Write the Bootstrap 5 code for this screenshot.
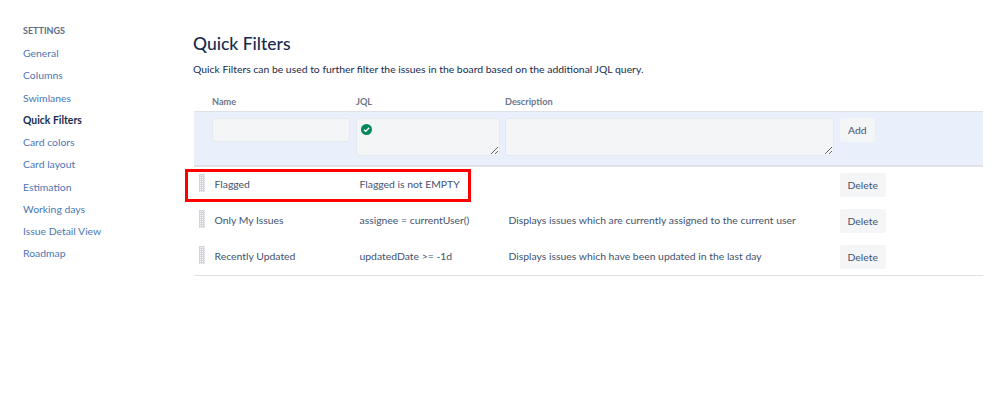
<!DOCTYPE html>
<html lang="en">
<head>
<meta charset="utf-8">
<title>Quick Filters</title>
<link href="https://cdn.jsdelivr.net/npm/bootstrap@5.3.0/dist/css/bootstrap.min.css" rel="stylesheet">
<style>
html,body{height:420px;overflow:hidden;background:#fff}
body{font-family:"Lato","Open Sans",sans-serif;font-size:10.4px;color:#172b4d;width:998px}
.shell{padding-top:25px;display:flex}
.side{width:193px;flex:none;padding-left:23px}
.side-title{font-size:9px;font-weight:700;color:#5e6c84;line-height:12px;margin-bottom:9px}
.side a{display:block;color:#4a76b5;text-decoration:none;line-height:14px;margin-bottom:8.25px;font-size:10.4px}
.side a.on{color:#172b4d;font-weight:700}
.main{width:790px;flex:none;position:relative}
.main h1{font-size:17.5px;font-weight:500;color:#172b4d;margin:7px 0 6px;line-height:24px}
.intro{font-size:10.4px;line-height:14px;margin:0 0 20px}
.cols{display:flex;margin-left:1px;padding-left:18px}
.c1{width:144px;flex:none}
.c2{width:149px;flex:none}
.c3{width:329px;flex:none}
.heads{font-size:9.2px;font-weight:700;color:#6b778c;line-height:12px;height:15px}
.adder{background:#e9f0fb;border-top:1px solid #dfe1e6;border-bottom:2px solid #dfe1e6;height:56px;padding-top:6px}
.fld{background:#f4f5f7;border:1px solid #e6e8ec;border-radius:3px;display:block;padding:0;margin:0;outline:0}
.f1{width:138px;height:24px}
.wrapjql{position:relative;width:144px;height:38px}
.f2{width:144px;height:38px;resize:both}
.f3{width:329px;height:38px;resize:both}
.gap{margin-left:6px}
.okicon{position:absolute;left:5px;top:6px;width:11px;height:11px;display:block}
.act{background:#f4f5f7;color:#42526e;border:0;border-radius:3px;font-size:10.4px;line-height:14px;padding:0 8px;height:24px;display:block}
.rowx{height:36px;align-items:center;color:#42526e;font-size:10.4px;padding-left:5px}
.rowx .grip{width:6px;height:18px;flex:none;margin:-5px 9.5px 0 0;background-color:#f4f5f7;background-image:linear-gradient(#d3d5da 1px,transparent 1px),linear-gradient(90deg,#d3d5da 1px,transparent 1px);background-size:2px 2px}
.rowx .r1{width:145px;flex:none}
.rowx .r2{width:149px;flex:none}
.rowx .r3{width:331px;flex:none}
.listing{border-bottom:1px solid #dfe1e6;margin-left:1px}
.mark-box{position:absolute;left:-8px;top:144px;width:286px;height:33px;border:3px solid #f00;pointer-events:none}
</style>
</head>
<body>
<div class="shell">
  <nav class="side">
    <div class="side-title">SETTINGS</div>
    <a href="#">General</a>
    <a href="#">Columns</a>
    <a href="#">Swimlanes</a>
    <a href="#" class="on">Quick Filters</a>
    <a href="#">Card colors</a>
    <a href="#">Card layout</a>
    <a href="#">Estimation</a>
    <a href="#">Working days</a>
    <a href="#">Issue Detail View</a>
    <a href="#">Roadmap</a>
  </nav>
  <main class="main">
    <h1>Quick Filters</h1>
    <p class="intro">Quick Filters can be used to further filter the issues in the board based on the additional JQL query.</p>
    <div class="cols heads"><div class="c1">Name</div><div class="c2">JQL</div><div class="c3">Description</div></div>
    <div class="adder cols">
      <div class="c1"><input class="fld f1" type="text" aria-label="Name"></div>
      <div class="c2"><div class="wrapjql"><textarea class="fld f2" aria-label="JQL"></textarea>
        <svg class="okicon" viewBox="0 0 12 12"><circle cx="6" cy="6" r="6" fill="#00875a"/><path d="M3.2 6.2 5.2 8 8.9 4.2" fill="none" stroke="#fff" stroke-width="1.6"/></svg></div></div>
      <div class="c3"><textarea class="fld f3" aria-label="Description"></textarea></div>
      <div class="gap"><button class="act" type="button">Add</button></div>
    </div>
    <div class="listing">
      <div class="d-flex rowx"><span class="grip"></span><div class="r1">Flagged</div><div class="r2">Flagged is not EMPTY</div><div class="r3"></div><button class="act" type="button">Delete</button></div>
      <div class="d-flex rowx"><span class="grip"></span><div class="r1">Only My Issues</div><div class="r2">assignee = currentUser()</div><div class="r3">Displays issues which are currently assigned to the current user</div><button class="act" type="button">Delete</button></div>
      <div class="d-flex rowx"><span class="grip"></span><div class="r1">Recently Updated</div><div class="r2">updatedDate &gt;= -1d</div><div class="r3">Displays issues which have been updated in the last day</div><button class="act" type="button">Delete</button></div>
    </div>
    <div class="mark-box"></div>
  </main>
</div>
<script src="https://cdn.jsdelivr.net/npm/bootstrap@5.3.0/dist/js/bootstrap.bundle.min.js"></script>
</body>
</html>
